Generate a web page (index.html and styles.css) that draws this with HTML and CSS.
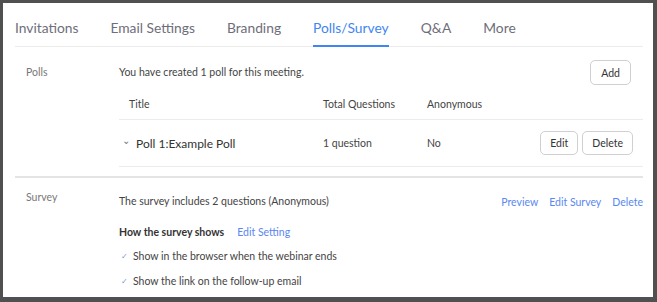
FILE: index.html
```html
<!DOCTYPE html>
<html>
<head>
<meta charset="utf-8">
<link rel="stylesheet" href="styles.css">
</head>
<body>
<div class="frame">
  <nav class="tabs">
    <span class="tab">Invitations</span>
    <span class="tab">Email Settings</span>
    <span class="tab">Branding</span>
    <span class="tab active">Polls/Survey</span>
    <span class="tab">Q&amp;A</span>
    <span class="tab">More</span>
  </nav>
  <section class="section polls">
    <div class="label">Polls</div>
    <div class="content">
      <div class="topline">
        <span class="info">You have created 1 poll for this meeting.</span>
        <button class="btn add">Add</button>
      </div>
      <div class="row head">
        <span class="c1">Title</span>
        <span class="c2">Total Questions</span>
        <span class="c3">Anonymous</span>
      </div>
      <div class="row item">
        <span class="c1 title"><span class="chev">&#8964;</span>Poll 1:Example Poll</span>
        <span class="c2">1 question</span>
        <span class="c3">No</span>
        <span class="actions"><button class="btn">Edit</button><button class="btn">Delete</button></span>
      </div>
    </div>
  </section>
  <section class="section survey">
    <div class="label">Survey</div>
    <div class="content">
      <div class="topline s">
        <span class="info">The survey includes 2 questions (Anonymous)</span>
        <span class="links"><a>Preview</a><a>Edit Survey</a><a>Delete</a></span>
      </div>
      <div class="how"><span class="bold">How the survey shows</span><a>Edit Setting</a></div>
      <div class="check"><span class="tick">&#10003;</span>Show in the browser when the webinar ends</div>
      <div class="check"><span class="tick">&#10003;</span>Show the link on the follow-up email</div>
    </div>
  </section>
</div>
</body>
</html>
```
FILE: styles.css
```css
html, body { margin: 0; padding: 0; }
body {
  background: #505050;
  font-family: Lato, "Open Sans", sans-serif;
  width: 657px;
  height: 302px;
  overflow: hidden;
}
.frame {
  background: #fff;
  margin: 3px 4px 0 3px;
  height: 294px;
  padding: 0 10px 0 12px;
  overflow: hidden;
}
.tabs {
  display: flex;
  gap: 32px;
  height: 43px;
  align-items: flex-end;
  border-bottom: 1px solid #ececec;
}
.tab {
  font-size: 13.8px;
  color: #6e6e7a;
  padding-bottom: 9px;
  line-height: 17px;
  border-bottom: 2px solid transparent;
  margin-bottom: -1px;
}
.tab.active {
  color: #3f86f3;
  border-bottom-color: #3f86f3;
}
.section {
  display: grid;
  grid-template-columns: 104px 1fr;
}
.polls { border-bottom: 2px solid #e4e4e4; padding-bottom: 9px; }
.label {
  padding-left: 11px;
  font-size: 10.5px;
  color: #777;
}
.polls .label { padding-top: 19px; }
.survey .label { padding-top: 13px; }
.content { color: #444; font-size: 10.5px; }
.topline {
  display: flex;
  justify-content: space-between;
  align-items: flex-start;
  padding-top: 19px;
}
.topline .info { line-height: 13px; }
.btn {
  font-family: Lato, "Open Sans", sans-serif;
  background: #fff;
  border: 1px solid #cfcfd4;
  border-radius: 5px;
  font-size: 10.5px;
  color: #333;
  height: 25px;
  padding: 0 12px;
}
.add { margin-right: 12px; height: 25px; padding: 0 10px; }
.topline .add { margin-top: -6px; }
.row {
  display: flex;
  align-items: center;
  border-bottom: 1px solid #ececec;
}
.head { height: 31px; margin-top: 3px; }
.head .c1 { padding-left: 10px; width: 194px; }
.c1 { width: 204px; }
.c2 { width: 104px; }
.c3 { flex: 1; }
.item { height: 46px; }
.item .title { font-size: 12px; color: #333; padding-left: 3px; width: 201px; display: flex; align-items: center; }
.chev { font-size: 10px; color: #777; width: 14px; position: relative; top: -3px; }
.actions { display: flex; gap: 4px; padding-right: 10px; }
.actions .btn { height: 24px; padding: 0 9px; }
.survey .topline { padding-top: 17px; align-items: center; }
.links { display: flex; gap: 11px; }
a { color: #5a87ef; cursor: pointer; }
.how { margin-top: 18px; display: flex; align-items: baseline; gap: 13px; }
.how .bold { font-weight: bold; color: #333; }
.check { margin-top: 12px; display: flex; align-items: center; color: #444; }
.check + .check { margin-top: 13px; }
.tick { font-size: 8px; color: #7f93e0; width: 12px; padding-left: 2px; }
```
